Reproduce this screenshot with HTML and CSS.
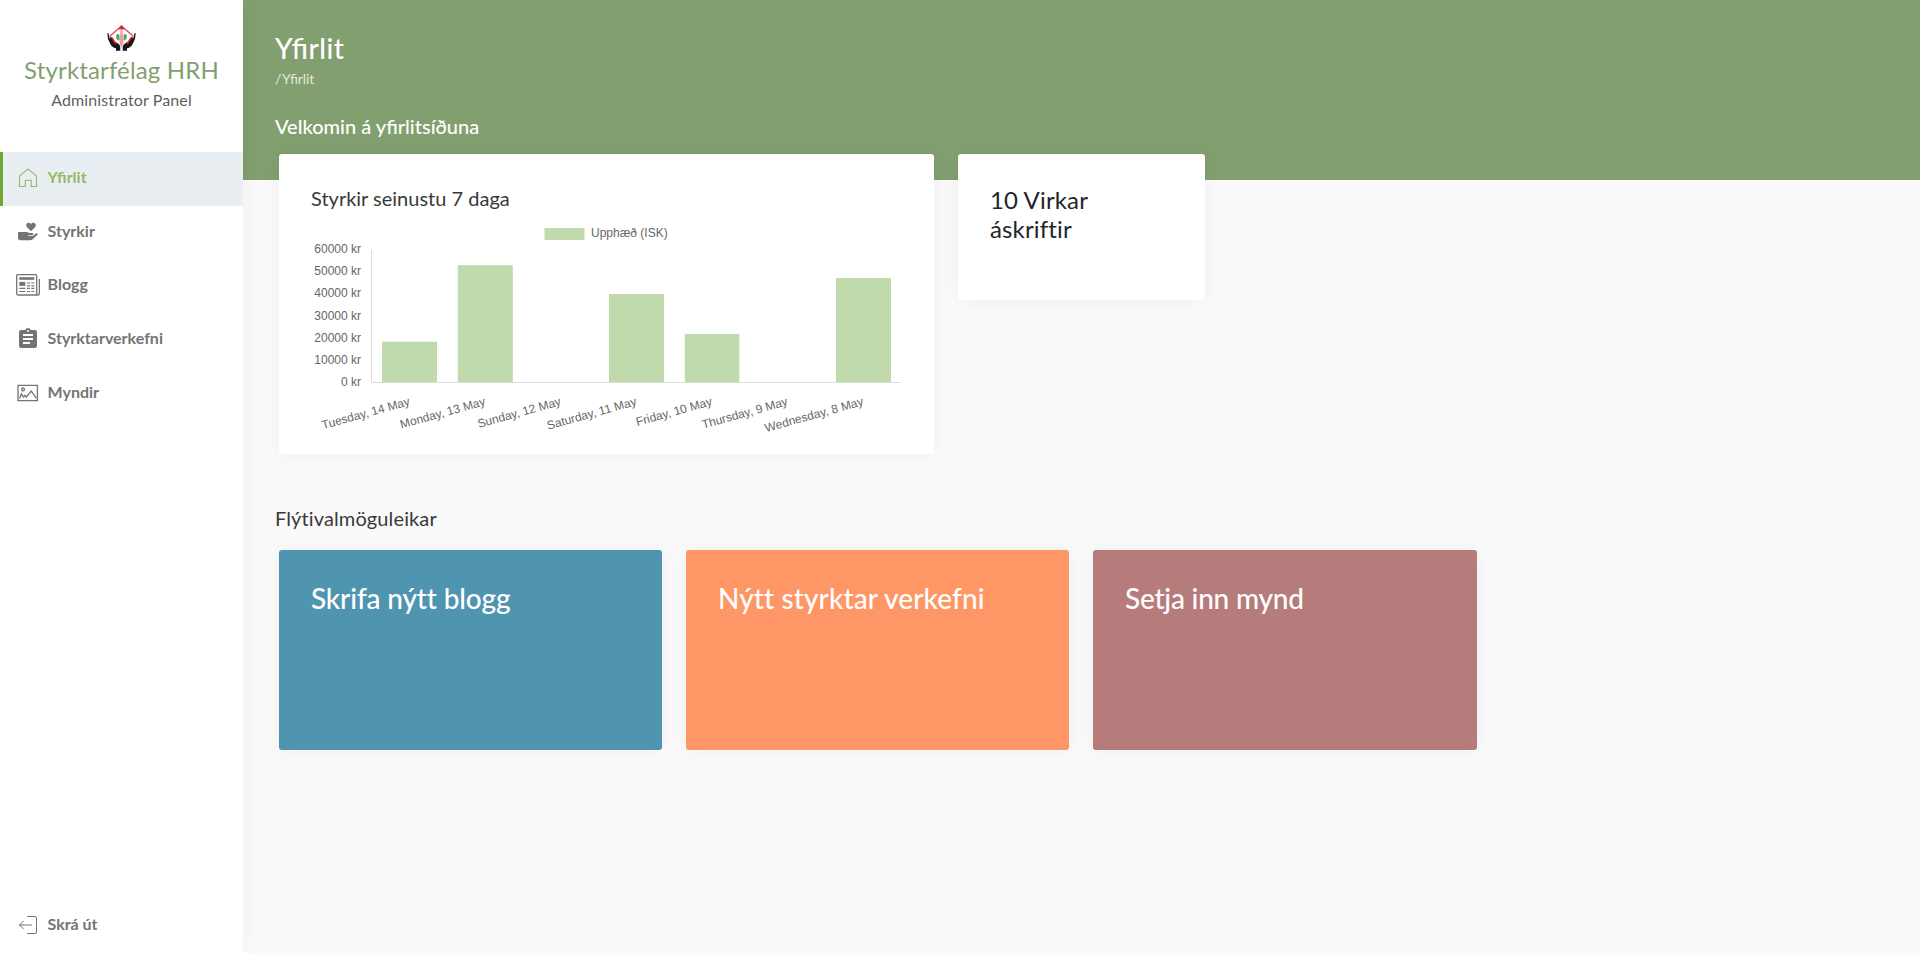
FILE: index.html
```html
<!DOCTYPE html>
<html lang="is">
<head>
<meta charset="utf-8">
<title>Yfirlit</title>
<link rel="stylesheet" href="styles.css">
</head>
<body>
<div class="app">
  <aside class="sidebar">
    <div class="brand">
      <svg class="brand-logo" width="30" height="27" viewBox="0 0 30 27">
        <path d="M14.500 1 3 11M14.500 1 26 11" stroke="#ea4650" stroke-width="1.300" fill="none"/>
        <path d="M14.500 0l3 4.500h-6z" fill="#e0202c"/>
        <path d="M13.700 4h1.600l1.200 14-2 5-2-5z" fill="#ef9a9e"/>
        <path d="M9.500 10c1.500-2 3.500-.5 3 2v3.500c-2.500 0-4-2.500-3-5.500zM19.500 10c-1.500-2-3.500-.5-3 2v3.500c2.500 0 4-2.500 3-5.500z" fill="#4aa868"/>
        <path d="M.300 8.200q1-.6 1.300.8l1.200 4.500q1.700-1.300 3 .7l2.500 3.300q.7-.7 1.800.3 3.200 2 3.200 4.500v3.500H9v-2.500q-4.500-.800-6-5Q.300 14 .3 8.200z" fill="#161616"/>
        <path d="M28.700 8.200q-1-.6-1.300.8l-1.200 4.500q-1.700-1.300-3 .7l-2.500 3.300q-.7-.7-1.800.3-3.200 2-3.200 4.500v3.500H20v-2.500q4.500-.8 6-5 2.700-4.300 2.700-10.100z" fill="#161616"/>
        <path d="M3.200 12q2.300.5 3 3l2.800 4M25.800 12q-2.300.5-3 3L20 19" stroke="#d51f2c" stroke-width="1.700" fill="none"/>
      </svg>
      <div class="brand-name">Styrktarfélag HRH</div>
      <div class="brand-sub">Administrator Panel</div>
    </div>
    <nav class="nav">
      <a class="nav-item active">
        <svg class="icon" width="24" height="24" viewBox="0 0 24 24" fill="none" stroke="currentColor" stroke-width="1.100"><path d="M3.500 20.500V10.200L12 2.800l8.500 7.400v10.300h-5.300v-6.200H9.300v6.200z" stroke-linejoin="round"/></svg>
        <span class="nav-label">Yfirlit</span></a>
      <a class="nav-item">
        <svg class="icon" width="24" height="24" viewBox="0 0 24 24" fill="currentColor"><path d="M15 11.200 10.800 7a2.700 2.700 0 0 1 0-3.500C12 2.400 14 2.500 15 4.100c1-1.600 3-1.700 4.200-.6A2.700 2.700 0 0 1 19.200 7z"/><path d="M2 12.800c0-.5.300-.8.800-.8h7.500c1.200 0 2 .4 2.800 1h3.200c1.600 0 1.500 2.200 0 2.200h-4.200v.9h4.700l3.100-2.600c1.300-.9 2.500.300 1.500 1.400l-4.400 4.200c-.9.800-1.500 1.200-2.800 1.200H3.500L2 18.800z"/></svg>
        <span class="nav-label">Styrkir</span></a>
      <a class="nav-item">
        <svg class="icon" width="24" height="24" viewBox="0 0 24 24" fill="none" stroke="currentColor"><path d="M2 1.700h17.500q1.200 0 1.200 1.200v17.500q0 1.600 1.200 1.600H2.200Q.7 22 .7 20.500V3q0-1.300 1.300-1.300zM23.400 6v14.500q0 1.500-1.500 1.500" stroke-width="1.300"/><path d="M3.300 5.500h15" stroke-width="2.600"/><path d="M3.300 10.900h6" stroke-width="4"/><path d="M11 10h3m1.200 0h3.100M11 12.800h3m1.200 0h3.100M3.300 15.300h6M11 15.300h3m1.200 0h3.100M3.300 18.500h6M11 18.500h3m1.200 0h3.100" stroke-width="1.200"/></svg>
        <span class="nav-label">Blogg</span></a>
      <a class="nav-item">
        <svg class="icon" width="24" height="24" viewBox="0 0 24 24" fill="currentColor"><path d="M19 3h-4.200a3 3 0 0 0-5.600 0H5a2 2 0 0 0-2 2v14c0 1.100.9 2 2 2h14a2 2 0 0 0 2-2V5a2 2 0 0 0-2-2zm-7 0a1 1 0 1 1 0 2 1 1 0 0 1 0-2zm2 14H7v-2h7zm3-4H7v-2h10zm0-4H7V7h10z"/></svg>
        <span class="nav-label">Styrktarverkefni</span></a>
      <a class="nav-item">
        <svg class="icon" width="24" height="24" viewBox="0 0 24 24" fill="none" stroke="currentColor" stroke-width="1.300"><path d="M2 4.300h19.400v15.400H2z"/><circle cx="7" cy="8.400" r="1.400"/><path d="M3.500 17.500 5.300 13l2 3 1.700-1.800 1.300 2 4.900-6.200 5 7.200"/></svg>
        <span class="nav-label">Myndir</span></a>
    </nav>
    <a class="nav-item logout">
      <svg class="icon" width="24" height="24" viewBox="0 0 24 24" fill="none" stroke="currentColor" stroke-width="1"><path d="M11.500 3.500h7.500q1.500 0 1.500 1.500v14q0 1.500-1.500 1.500h-7.500M3.500 12h12M7.300 8.200 3.500 12l3.800 3.800" stroke-linecap="round"/></svg>
      <span class="nav-label">Skrá út</span></a>
  </aside>
  <main class="main">
    <header class="page-head">
      <h1 class="page-title">Yfirlit</h1>
      <div class="crumb">/ Yfirlit</div>
      <h2 class="welcome">Velkomin á yfirlitsíðuna</h2>
    </header>
    <section class="stats">
      <div class="card chart-card">
        <h3 class="card-title">Styrkir seinustu 7 daga</h3>
        <svg class="chart" width="591" height="215" viewBox="311 218 591 215">
          <g class="bars">
            <rect x="544.500" y="228" width="40" height="12"/>
            <rect x="382" y="341.700" width="55" height="40.800"/>
            <rect x="457.800" y="265.200" width="55" height="117.300"/>
            <rect x="609" y="294" width="55" height="88.500"/>
            <rect x="684.800" y="334" width="54.500" height="48.500"/>
            <rect x="836" y="278" width="55" height="104.500"/>
          </g>
          <path class="axis" d="M371.500 250v132.500H901"/>
          <text x="591" y="237">Upphæð (ISK)</text>
          <g class="ylab">
            <text x="361" y="253">60000 kr</text>
            <text x="361" y="275">50000 kr</text>
            <text x="361" y="297">40000 kr</text>
            <text x="361" y="320">30000 kr</text>
            <text x="361" y="342">20000 kr</text>
            <text x="361" y="364">10000 kr</text>
            <text x="361" y="386">0 kr</text>
          </g>
          <g class="xlab">
            <text transform="translate(410.500 405) rotate(-15.500)">Tuesday, 14 May</text>
            <text transform="translate(486 405) rotate(-15.500)">Monday, 13 May</text>
            <text transform="translate(561.600 405) rotate(-15.500)">Sunday, 12 May</text>
            <text transform="translate(637.200 405) rotate(-15.500)">Saturday, 11 May</text>
            <text transform="translate(712.800 405) rotate(-15.500)">Friday, 10 May</text>
            <text transform="translate(788.400 405) rotate(-15.500)">Thursday, 9 May</text>
            <text transform="translate(864 405) rotate(-15.500)">Wednesday, 8 May</text>
          </g>
        </svg>
      </div>
      <div class="card count-card"><div class="count">10 Virkar<br>áskriftir</div></div>
    </section>
    <h2 class="section-title">Flýtivalmöguleikar</h2>
    <section class="shortcuts">
      <a class="card tile blue">Skrifa nýtt blogg</a>
      <a class="card tile orange">Nýtt styrktar verkefni</a>
      <a class="card tile rose">Setja inn mynd</a>
    </section>
  </main>
</div>
</body>
</html>
```
FILE: styles.css
```css
* { box-sizing: border-box; }
body { margin: 0; font-family: Lato, sans-serif; color: #393939; background: #fafafa; font-variant-ligatures: none; }
h1, h2, h3 { margin: 0; font-weight: 400; }
.app { display: flex; height: 953px; overflow: hidden; }
.sidebar {
  width: 243px; flex: none; display: flex; flex-direction: column;
  background: #fff; z-index: 1; box-shadow: 0 0 20px rgba(0, 0, 0, .05);
}
.brand { height: 152px; padding-top: 25px; display: flex; flex-direction: column; align-items: center; }
.brand-logo { display: block; }
.brand-name { font-size: 24px; line-height: 36px; color: #829f6f; letter-spacing: .15px; }
.brand-sub { font-size: 16px; line-height: 24px; color: #5f5f5f; letter-spacing: .12px; }
.nav { display: flex; flex-direction: column; }
.nav-item {
  height: 53.700px; padding: 0 0 2px 16px; display: flex; align-items: center; gap: 7.500px;
  font-size: 16px; font-weight: 700; color: #747474;
}
.nav-label { padding-bottom: 2.600px; }
.nav-item.active { background: #e9eef2; color: #94b966; padding-left: 13px; border-left: 3px solid #6fa832; }
.nav-item.active .nav-label, .page-title, .crumb, .welcome { font-variant-ligatures: normal; font-feature-settings: "liga" 1; }
.icon { flex: none; }
.logout { margin-top: auto; }
.main { flex: 1; }
.page-head { height: 180px; padding: 31px 32px 0; background: #829f6f; color: #fff; }
.page-title { font-size: 28px; line-height: 34px; font-weight: 500; letter-spacing: .5px; }
.crumb { font-size: 14px; line-height: 20px; margin-top: 4px; color: #e3e8df; word-spacing: -2px; letter-spacing: -.15px; }
.welcome { font-size: 20px; line-height: 24px; margin-top: 25px; font-weight: 500; }
.card { border-radius: 3px; box-shadow: 0 0 20px rgba(0, 0, 0, .05); }
.stats { display: flex; align-items: flex-start; gap: 24px; margin-top: -26px; padding-left: 36px; }
.chart-card { width: 655px; height: 300px; padding: 32px; background: #fff; }
.card-title { font-size: 20px; line-height: 24px; margin-bottom: 8px; }
.chart { display: block; overflow: visible; font: 12px "Liberation Sans", Arial, sans-serif; fill: #666; }
.bars { fill: #c0daab; }
.axis { fill: none; stroke: #dedede; }
.ylab, .xlab { text-anchor: end; }
.count-card { width: 247px; height: 146px; padding: 31px 32px; background: #fff; }
.count { font-size: 24px; line-height: 29px; color: #212529; letter-spacing: .15px; }
.section-title { font-size: 20px; line-height: 24px; margin: 52px 0 0 32px; letter-spacing: .12px; }
.shortcuts { display: grid; grid-template-columns: 383px 383px 384px; gap: 24px; padding: 20px 0 0 36px; }
.tile { height: 200px; padding: 31px 32px; font-size: 28px; line-height: 34px; color: #fff; font-weight: 500; }
.blue { background: #4f95b0; letter-spacing: -.15px; }
.orange { background: #ff9666; letter-spacing: .1px; }
.rose { background: #b67b7b; letter-spacing: -.22px; }
```
